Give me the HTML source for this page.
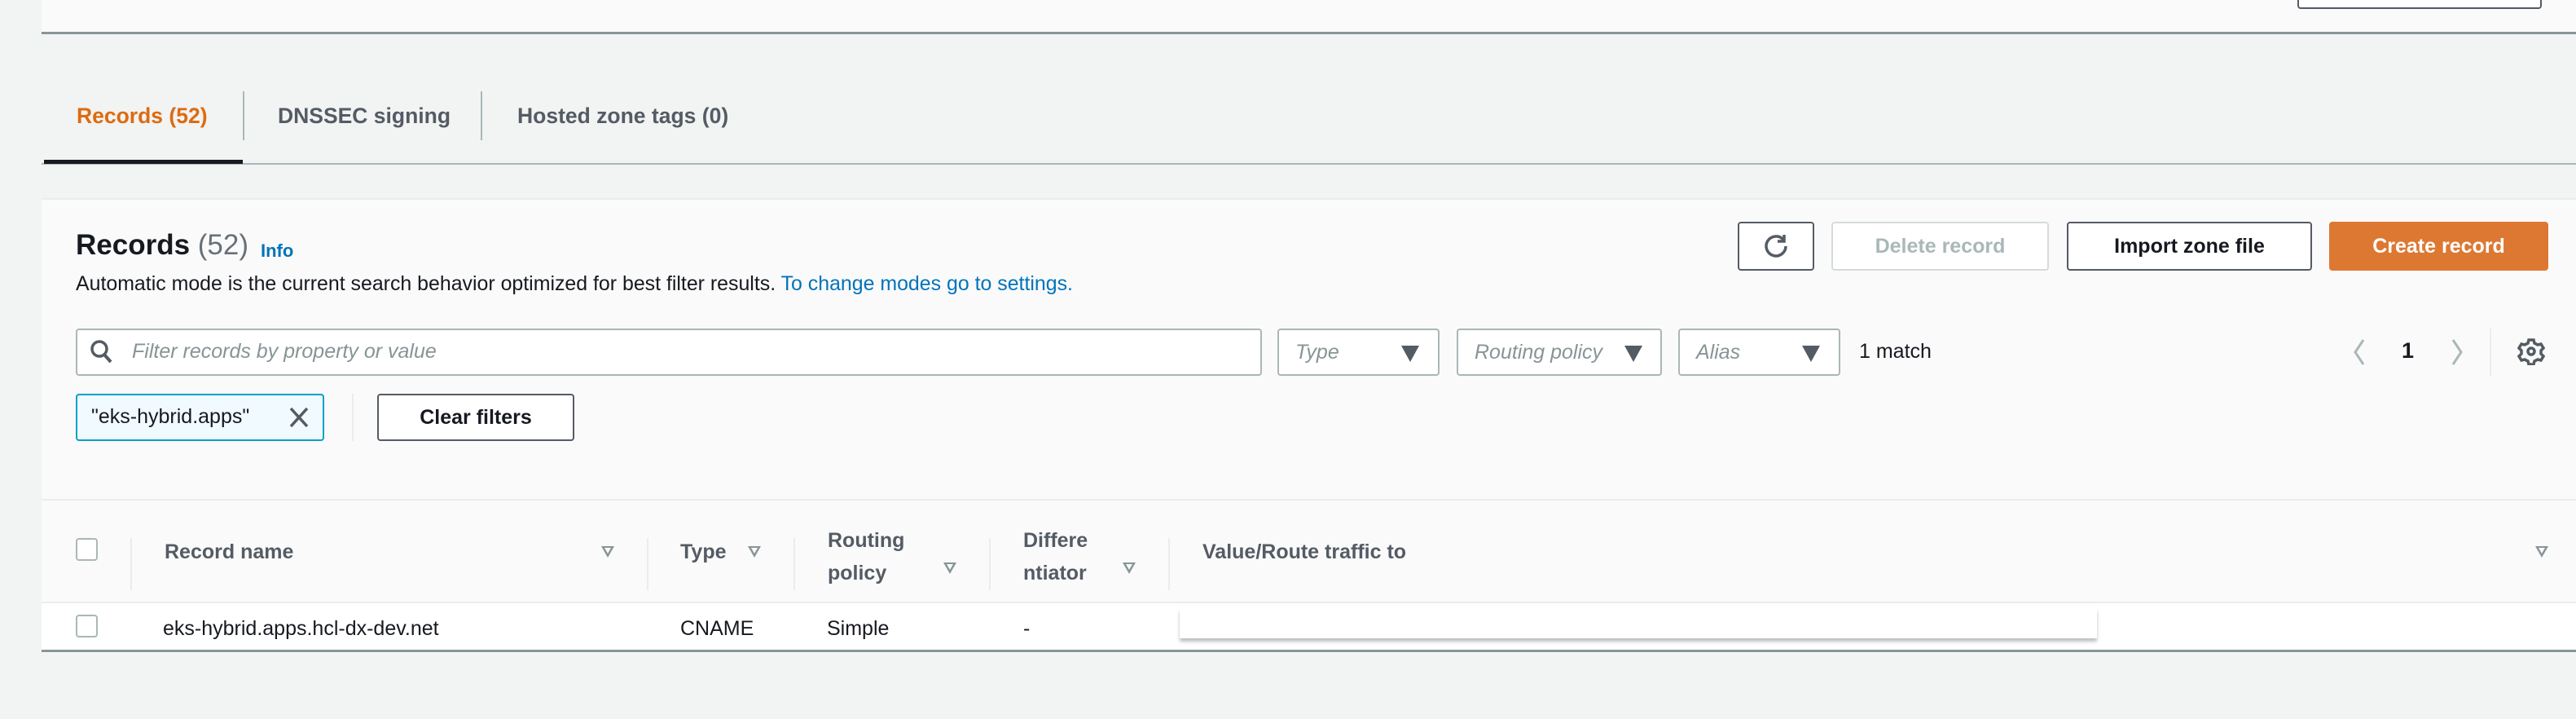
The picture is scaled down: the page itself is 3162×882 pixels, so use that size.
<!DOCTYPE html>
<html><head><meta charset="utf-8"><style>
*{box-sizing:border-box;margin:0;padding:0}
body{width:3162px;height:882px;background:#f2f3f3;font-family:"Liberation Sans",sans-serif;position:relative;overflow:hidden;color:#16191f}
.a{position:absolute}
.t{white-space:nowrap}
.btn{position:absolute;border:2px solid #545b64;border-radius:4px;background:#fff;font-weight:bold;font-size:25px;color:#16191f;display:flex;align-items:center;justify-content:center}
.sel{position:absolute;top:403px;height:58px;border:2px solid #aab7b8;border-radius:4px;background:#fff;font-style:italic;color:#879596;font-size:25px;padding-left:20px;display:flex;align-items:center}
.tri{position:absolute;width:0;height:0;border-left:11px solid transparent;border-right:11px solid transparent;border-top:20px solid #545b64}
.hd{position:absolute;font-weight:bold;font-size:25px;color:#545b64;white-space:nowrap}
.fi{position:absolute;width:0;height:0;border-left:8px solid transparent;border-right:8px solid transparent;border-top:14px solid #879596}
.fi:after{content:"";position:absolute;left:-4px;top:-12px;border-left:4px solid transparent;border-right:4px solid transparent;border-top:7px solid #fafafa}
.vs{position:absolute;top:660px;width:2px;height:64px;background:#eaeded}
.cb{position:absolute;width:27px;height:28px;border:2px solid #aab7b8;border-radius:4px;background:#fff}
</style></head><body>
<div class="a" style="left:51px;top:0;width:3111px;height:42px;background:#fafafa;border-bottom:3px solid #879596"></div>
<div class="a" style="left:2820px;top:-4px;width:300px;height:15px;border:2px solid #545b64;border-radius:4px;background:#fff"></div>

<div class="a t" style="left:94px;top:127px;font-size:26.5px;font-weight:bold;color:#dd6b10">Records (52)</div>
<div class="a" style="left:298px;top:112px;width:2px;height:60px;background:#aab7b8"></div>
<div class="a t" style="left:341px;top:127px;font-size:26.5px;font-weight:bold;color:#545b64">DNSSEC signing</div>
<div class="a" style="left:590px;top:112px;width:2px;height:60px;background:#aab7b8"></div>
<div class="a t" style="left:635px;top:127px;font-size:26.5px;font-weight:bold;color:#545b64">Hosted zone tags (0)</div>
<div class="a" style="left:51px;top:200px;width:3111px;height:2px;background:#aab7b8"></div>
<div class="a" style="left:54px;top:196px;width:244px;height:5px;background:#16191f"></div>

<div class="a" style="left:51px;top:243px;width:3111px;height:558px;background:#fafafa;border-top:2px solid #eaeded"></div>
<div class="a t" style="left:93px;top:281px;font-size:35px;font-weight:bold;color:#16191f">Records <span style="font-weight:normal;color:#687078">(52)</span></div>
<div class="a t" style="left:320px;top:295px;font-size:22px;font-weight:bold;color:#0073bb">Info</div>
<div class="a t" style="left:93px;top:334px;font-size:24.9px;color:#16191f">Automatic mode is the current search behavior optimized for best filter results. <span style="color:#0073bb">To change modes go to settings.</span></div>

<div class="btn" style="left:2133px;top:272px;width:94px;height:60px">
<svg width="34" height="34" viewBox="0 0 34 34"><path d="M26 9 A12 12 0 1 0 29 17" fill="none" stroke="#545b64" stroke-width="3.5"/><path d="M27 3 V11 H19" fill="none" stroke="#545b64" stroke-width="3.5"/></svg></div>
<div class="btn" style="left:2248px;top:272px;width:267px;height:60px;border-color:#d5dbdb;color:#aab7b8">Delete record</div>
<div class="btn" style="left:2537px;top:272px;width:301px;height:60px">Import zone file</div>
<div class="btn" style="left:2859px;top:272px;width:269px;height:60px;background:#dd7833;border-color:#dd7833;color:#fff">Create record</div>

<div class="a" style="left:93px;top:403px;width:1456px;height:58px;border:2px solid #aab7b8;border-radius:4px;background:#fff"></div>
<svg class="a" style="left:110px;top:416px" width="30" height="32" viewBox="0 0 30 32"><circle cx="12" cy="12" r="9" fill="none" stroke="#545b64" stroke-width="3.5"/><path d="M18 19 L26 28" stroke="#545b64" stroke-width="4"/></svg>
<div class="a t" style="left:162px;top:417px;font-size:25px;font-style:italic;color:#879596">Filter records by property or value</div>

<div class="sel" style="left:1568px;width:199px">Type<div class="tri" style="left:150px;top:19px"></div></div>
<div class="sel" style="left:1788px;width:252px">Routing policy<div class="tri" style="left:204px;top:19px"></div></div>
<div class="sel" style="left:2060px;width:199px">Alias<div class="tri" style="left:150px;top:19px"></div></div>
<div class="a t" style="left:2282px;top:417px;font-size:25px;color:#16191f">1 match</div>
<svg class="a" style="left:2886px;top:414px" width="20" height="36" viewBox="0 0 20 36"><path d="M15 3 L5 18 L15 33" fill="none" stroke="#aab7b8" stroke-width="3"/></svg>
<div class="a t" style="left:2948px;top:415px;font-size:27px;font-weight:bold">1</div>
<svg class="a" style="left:3006px;top:414px" width="20" height="36" viewBox="0 0 20 36"><path d="M5 3 L15 18 L5 33" fill="none" stroke="#aab7b8" stroke-width="3"/></svg>
<div class="a" style="left:3056px;top:403px;width:2px;height:58px;background:#eaeded"></div>
<svg class="a" style="left:3090px;top:414px" width="34" height="34" viewBox="0 0 34 34"><g fill="none" stroke="#545b64" stroke-width="3.5"><circle cx="17" cy="17" r="4"/><path d="M14 3h6l1 4 4 2 4-1 3 5-3 3v4l3 3-3 5-4-1-4 2-1 4h-6l-1-4-4-2-4 1-3-5 3-3v-4l-3-3 3-5 4 1 4-2z"/></g></svg>

<div class="a" style="left:93px;top:483px;width:305px;height:58px;border:2px solid #00a1c9;border-radius:4px;background:#f1faff"></div>
<div class="a t" style="left:112px;top:497px;font-size:25px;color:#16191f">"eks-hybrid.apps"</div>
<svg class="a" style="left:354px;top:498px" width="26" height="28" viewBox="0 0 26 28"><path d="M3 3 L23 25 M23 3 L3 25" stroke="#545b64" stroke-width="3.5"/></svg>
<div class="a" style="left:432px;top:483px;width:2px;height:58px;background:#eaeded"></div>
<div class="btn" style="left:463px;top:483px;width:242px;height:58px">Clear filters</div>

<div class="a" style="left:51px;top:612px;width:3111px;height:2px;background:#eaeded"></div>
<div class="cb" style="left:93px;top:660px"></div>
<div class="vs" style="left:160px"></div>
<div class="hd" style="left:202px;top:663px">Record name</div><div class="fi" style="left:738px;top:670px"></div>
<div class="vs" style="left:794px"></div>
<div class="hd" style="left:835px;top:663px">Type</div><div class="fi" style="left:918px;top:670px"></div>
<div class="vs" style="left:974px"></div>
<div class="hd" style="left:1016px;top:643px;line-height:40px">Routing<br>policy</div><div class="fi" style="left:1158px;top:690px"></div>
<div class="vs" style="left:1214px"></div>
<div class="hd" style="left:1256px;top:643px;line-height:40px">Differe<br>ntiator</div><div class="fi" style="left:1378px;top:690px"></div>
<div class="vs" style="left:1434px"></div>
<div class="hd" style="left:1476px;top:663px">Value/Route traffic to</div><div class="fi" style="left:3112px;top:670px"></div>

<div class="a" style="left:51px;top:738px;width:3111px;height:62px;background:#fff;border-top:2px solid #eaeded;border-bottom:3px solid #879596"></div>
<div class="cb" style="left:93px;top:754px"></div>
<div class="a t" style="left:200px;top:757px;font-size:25px">eks-hybrid.apps.hcl-dx-dev.net</div>
<div class="a t" style="left:835px;top:757px;font-size:25px">CNAME</div>
<div class="a t" style="left:1015px;top:757px;font-size:25px">Simple</div>
<div class="a t" style="left:1256px;top:757px;font-size:25px">-</div>
<div class="a" style="left:1448px;top:746px;width:1126px;height:37px;background:#fff;box-shadow:0 4px 4px rgba(0,0,0,0.25)"></div>
</body></html>
